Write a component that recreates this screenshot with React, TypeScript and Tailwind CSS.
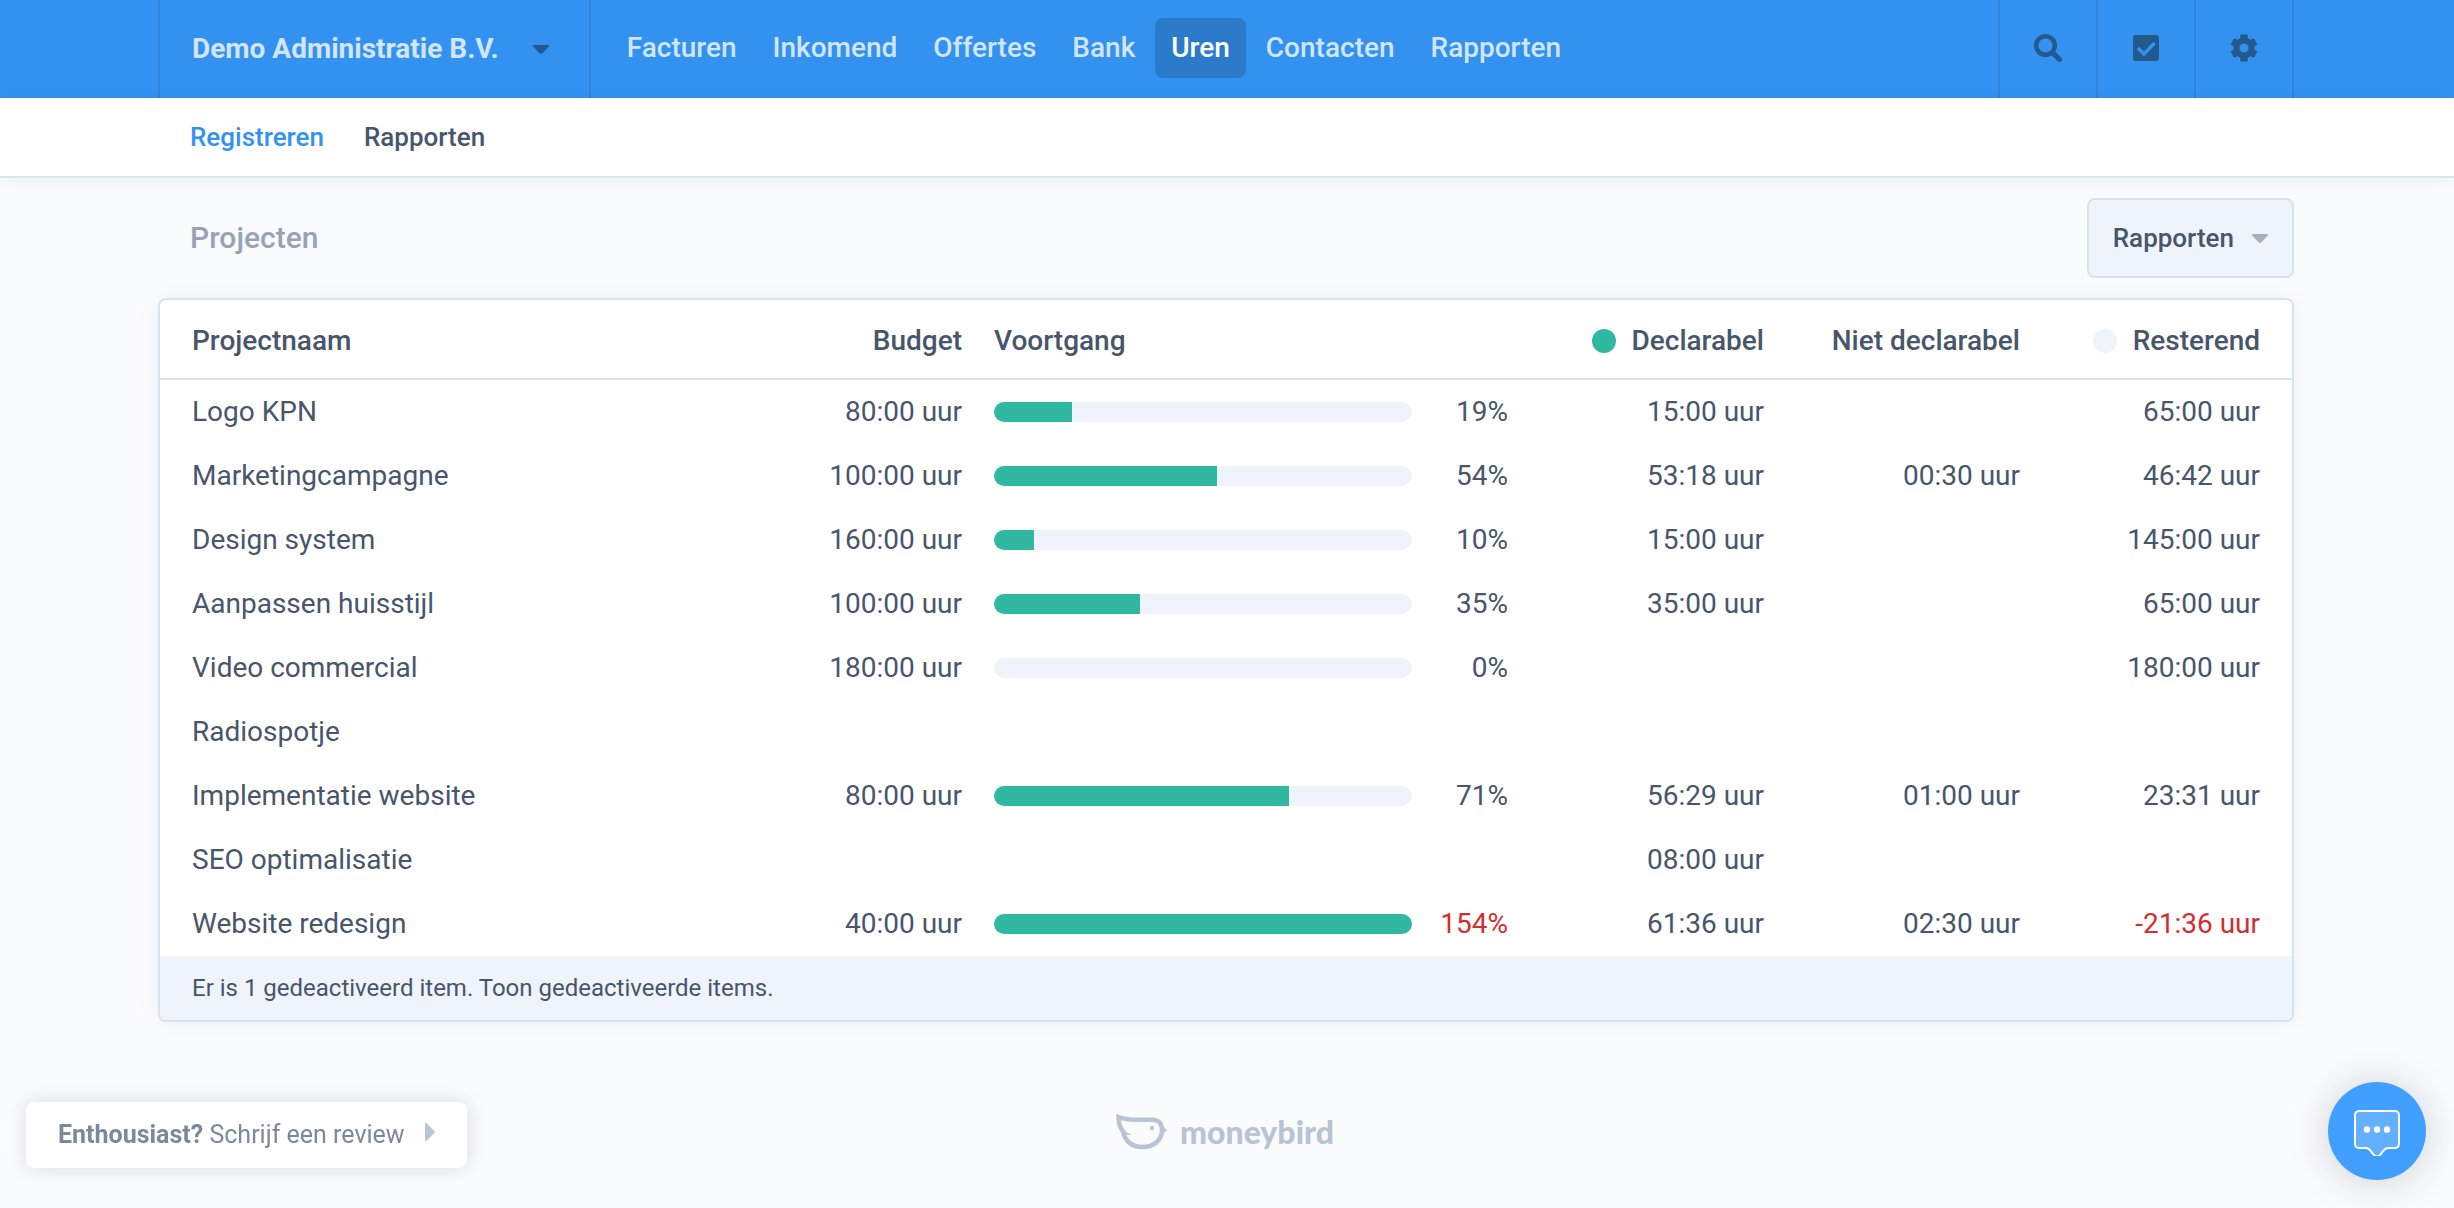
import { useState } from "react"

type Project = {
    name: string
    budget?: string
    progress?: number
    percentage?: string
    billable?: string
    nonBillable?: string
    remaining?: string
    overBudget?: boolean
}

const navItems = ["Facturen", "Inkomend", "Offertes", "Bank", "Uren", "Contacten", "Rapporten"]

const projects: Project[] = [
    { name: "Logo KPN", budget: "80:00 uur", progress: 18.75, percentage: "19%", billable: "15:00 uur", remaining: "65:00 uur" },
    { name: "Marketingcampagne", budget: "100:00 uur", progress: 53.3, percentage: "54%", billable: "53:18 uur", nonBillable: "00:30 uur", remaining: "46:42 uur" },
    { name: "Design system", budget: "160:00 uur", progress: 9.5, percentage: "10%", billable: "15:00 uur", remaining: "145:00 uur" },
    { name: "Aanpassen huisstijl", budget: "100:00 uur", progress: 35, percentage: "35%", billable: "35:00 uur", remaining: "65:00 uur" },
    { name: "Video commercial", budget: "180:00 uur", progress: 0, percentage: "0%", remaining: "180:00 uur" },
    { name: "Radiospotje" },
    { name: "Implementatie website", budget: "80:00 uur", progress: 70.6, percentage: "71%", billable: "56:29 uur", nonBillable: "01:00 uur", remaining: "23:31 uur" },
    { name: "SEO optimalisatie", billable: "08:00 uur" },
    { name: "Website redesign", budget: "40:00 uur", progress: 100, percentage: "154%", billable: "61:36 uur", nonBillable: "02:30 uur", remaining: "-21:36 uur", overBudget: true },
]

function Caret({ className }: { className: string }) {
    return (
        <svg viewBox="0 0 16 9" className={className} fill="currentColor" aria-hidden="true">
            <path d="M1 0h14c1 0 1.300 1 .7 1.700L9 8.500c-.6.600-1.400.600-2 0L.3 1.700C-.3 1 0 0 1 0z" />
        </svg>
    )
}

function SearchIcon() {
    return (
        <svg viewBox="0 0 28 28" className="size-7" fill="none" stroke="currentColor" aria-hidden="true">
            <circle cx="11.5" cy="11.5" r="9.300" strokeWidth="4.400" />
            <path d="M18 18l7 7" strokeWidth="5" />
            <path d="M24 24l1.500 1.500" strokeWidth="5" strokeLinecap="round" />
        </svg>
    )
}

function CheckIcon() {
    return (
        <svg viewBox="0 0 26 26" className="size-[26px]" aria-hidden="true">
            <rect width="26" height="26" rx="3" fill="currentColor" />
            <path d="M5 13l6 6L21.500 8" fill="none" stroke="#3391f0" strokeWidth="3.500" />
        </svg>
    )
}

function GearIcon() {
    return (
        <svg viewBox="-14 -14 28 28" className="size-7" fill="currentColor" aria-hidden="true">
            {[0, 60, 120].map((angle) => (
                <rect key={angle} x="-3.800" y="-13.500" width="7.600" height="27" rx="1" transform={`rotate(${angle})`} />
            ))}
            <circle r="10.500" />
            <circle r="4.500" fill="#3391f0" />
        </svg>
    )
}

function BirdIcon() {
    return (
        <svg viewBox="0 0 52 36" className="h-9 w-[52px]" aria-hidden="true">
            <path
                d="M2.500 3c6 2.500 12 2.800 20 2.800h14c6 0 9.500 4 9.500 10.500C46 26 38 33 26.500 33 16 33 8.500 27 7.500 18 4 14 2.500 9 2.500 3z"
                fill="none"
                stroke="currentColor"
                strokeWidth="4.500"
            />
            <path d="M46 12l5.500 4.500L46 20z" fill="currentColor" />
            <path d="M6 14c2 3 5 5 9.500 6.500-2.500.800-5.500.500-8-.5z" fill="currentColor" />
            <circle cx="36" cy="14" r="2.200" fill="currentColor" />
        </svg>
    )
}

function ChatIcon() {
    return (
        <svg viewBox="0 0 46 46" className="size-[46px]" aria-hidden="true">
            <path
                d="M5 1h36a4 4 0 0 1 4 4v29a4 4 0 0 1-4 4h-7c-3 0-4 2-5.500 4l-2.500 3c-1.500 2-4.500 2-6 0l-2.500-3C16 40 15 38 12 38H5a4 4 0 0 1-4-4V5a4 4 0 0 1 4-4z"
                fill="#fff"
                fillOpacity="0.18"
                stroke="#fff"
                strokeWidth="2"
            />
            <circle cx="13" cy="19.500" r="3.200" fill="#fff" />
            <circle cx="23" cy="19.500" r="3.200" fill="#fff" />
            <circle cx="33" cy="19.500" r="3.200" fill="#fff" />
        </svg>
    )
}

function ProgressBar({ value }: { value: number }) {
    return (
        <div className="h-5 overflow-hidden rounded-full bg-[#eff4fb]">
            <div className="h-full bg-[#30b8a0]" style={{ width: `${value}%` }} />
        </div>
    )
}

export default function App() {
    const [active, setActive] = useState("Uren")

    return (
        <div className="flex min-h-screen flex-col bg-[#f9fbfd] font-[Roboto,sans-serif] text-[28px] leading-8 text-[#47566b]">
            <header className="bg-[#3391f0] pr-40 pl-[158px]">
                <div className="flex h-[98px] border-l-2 border-[#2e82d8] text-[#d1e6fc]">
                    <button className="flex items-center gap-[34px] border-r-2 border-[#2e82d8] pr-10 pl-8 font-bold whitespace-nowrap">
                        Demo Administratie B.V.
                        <Caret className="h-[9px] w-4 text-[#215a8b]" />
                    </button>
                    <nav className="flex flex-1 items-center gap-1 pb-0.5 pl-5">
                        {navItems.map((item) => (
                            <a
                                key={item}
                                href="#"
                                onClick={() => setActive(item)}
                                className={
                                    item === active
                                        ? "flex h-[60px] items-center rounded-lg bg-[#2c7bcb] px-4 font-medium text-white"
                                        : "flex h-[60px] items-center rounded-lg px-4 font-medium"
                                }
                            >
                                {item}
                            </a>
                        ))}
                    </nav>
                    <div className="flex text-[#215a8b]">
                        <button aria-label="Zoeken" className="flex w-[98px] items-center justify-center border-l-2 border-[#2e82d8] pb-0.5">
                            <SearchIcon />
                        </button>
                        <button aria-label="Taken" className="flex w-[98px] items-center justify-center border-l-2 border-[#2e82d8] pb-0.5">
                            <CheckIcon />
                        </button>
                        <button aria-label="Instellingen" className="flex w-[100px] items-center justify-center border-x-2 border-[#2e82d8] pb-0.5">
                            <GearIcon />
                        </button>
                    </div>
                </div>
            </header>

            <nav className="flex h-20 items-center gap-10 border-b-2 border-[#d9e4f0] bg-white px-[190px] text-[26px] font-medium shadow-[0_4px_16px_rgba(40,50,80,0.05)]">
                <a href="#" className="text-[#3391f0]">Registreren</a>
                <a href="#">Rapporten</a>
            </nav>

            <main className="pt-5 pr-40 pl-[158px]">
                <div className="mb-5 flex items-center justify-between pl-8">
                    <h1 className="text-[30px] font-medium text-[#97a3b4]">Projecten</h1>
                    <button className="flex h-20 items-center gap-[18px] rounded-lg border-2 border-[#d7e2f0] bg-[#eff4fb] px-6 text-[26px] font-medium">
                        Rapporten
                        <Caret className="h-[9px] w-4 text-[#a6b0be]" />
                    </button>
                </div>

                <section className="overflow-hidden rounded-lg border-2 border-[#d7e2f0] bg-white shadow-[0_0_24px_rgba(40,50,80,0.05)]">
                    <table className="w-full table-fixed border-separate border-spacing-0">
                        <colgroup>
                            <col />
                            <col className="w-[200px]" />
                            <col className="w-[450px]" />
                            <col className="w-24" />
                            <col className="w-64" />
                            <col className="w-64" />
                            <col className="w-64" />
                        </colgroup>
                        <thead>
                            <tr className="h-20 text-right *:border-b-2 *:border-[#d7e2f0] *:pt-1">
                                <th className="pl-8 text-left font-medium">Projectnaam</th>
                                <th className="px-4 font-medium">Budget</th>
                                <th colSpan={2} className="px-4 text-left font-medium">Voortgang</th>
                                <th className="px-4 font-medium">
                                    <span className="flex items-center justify-end gap-4">
                                        <span className="size-6 rounded-full bg-[#30b8a0]" />
                                        Declarabel
                                    </span>
                                </th>
                                <th className="px-4 font-medium">Niet declarabel</th>
                                <th className="pr-8 font-medium">
                                    <span className="flex items-center justify-end gap-4">
                                        <span className="size-6 rounded-full bg-[#eff4fb]" />
                                        Resterend
                                    </span>
                                </th>
                            </tr>
                        </thead>
                        <tbody>
                            {projects.map((project) => (
                                <tr key={project.name} className="h-16 text-right whitespace-nowrap">
                                    <td className="pl-8 text-left">{project.name}</td>
                                    <td className="px-4">{project.budget}</td>
                                    <td className="px-4">
                                        {project.progress !== undefined && <ProgressBar value={project.progress} />}
                                    </td>
                                    <td className={project.overBudget ? "pr-4 text-[#d12f2f]" : "pr-4"}>{project.percentage}</td>
                                    <td className="px-4">{project.billable}</td>
                                    <td className="px-4">{project.nonBillable}</td>
                                    <td className={project.overBudget ? "pr-8 text-[#d12f2f]" : "pr-8"}>{project.remaining}</td>
                                </tr>
                            ))}
                        </tbody>
                    </table>
                    <div className="flex h-16 items-center bg-[#eff4fb] px-8 text-2xl">
                        <p>
                            Er is 1 gedeactiveerd item. <a href="#">Toon gedeactiveerde items.</a>
                        </p>
                    </div>
                </section>
            </main>

            <footer className="flex items-center justify-center gap-3 pt-[92px] pr-1 text-[#b8c4d3]">
                <BirdIcon />
                <span className="font-[Lato,sans-serif] text-[32px] font-black">moneybird</span>
            </footer>

            <a
                href="#"
                className="fixed bottom-10 left-[26px] flex h-[66px] items-center gap-5 rounded-lg bg-white px-8 text-[25px] text-[#7c899a] shadow-[0_0_20px_rgba(40,40,60,0.15)]"
            >
                <span>
                    <strong className="font-bold">Enthousiast?</strong> Schrijf een review
                </span>
                <svg viewBox="0 0 10 18" className="mb-1.5 h-[18px] w-[10px] text-[#b8c4d3]" fill="currentColor" aria-hidden="true">
                    <path d="M0 1c0-1 1-1.300 1.700-.5l7.600 7.500c.5.600.5 1.400 0 2l-7.600 7.500C1 18.300 0 18 0 17z" />
                </svg>
            </a>
            <button
                aria-label="Chat"
                className="fixed right-7 bottom-7 flex size-[98px] items-center justify-center rounded-full bg-[#409fff] pt-1 shadow-[0_2px_40px_rgba(40,40,60,0.2)]"
            >
                <ChatIcon />
            </button>
        </div>
    )
}
